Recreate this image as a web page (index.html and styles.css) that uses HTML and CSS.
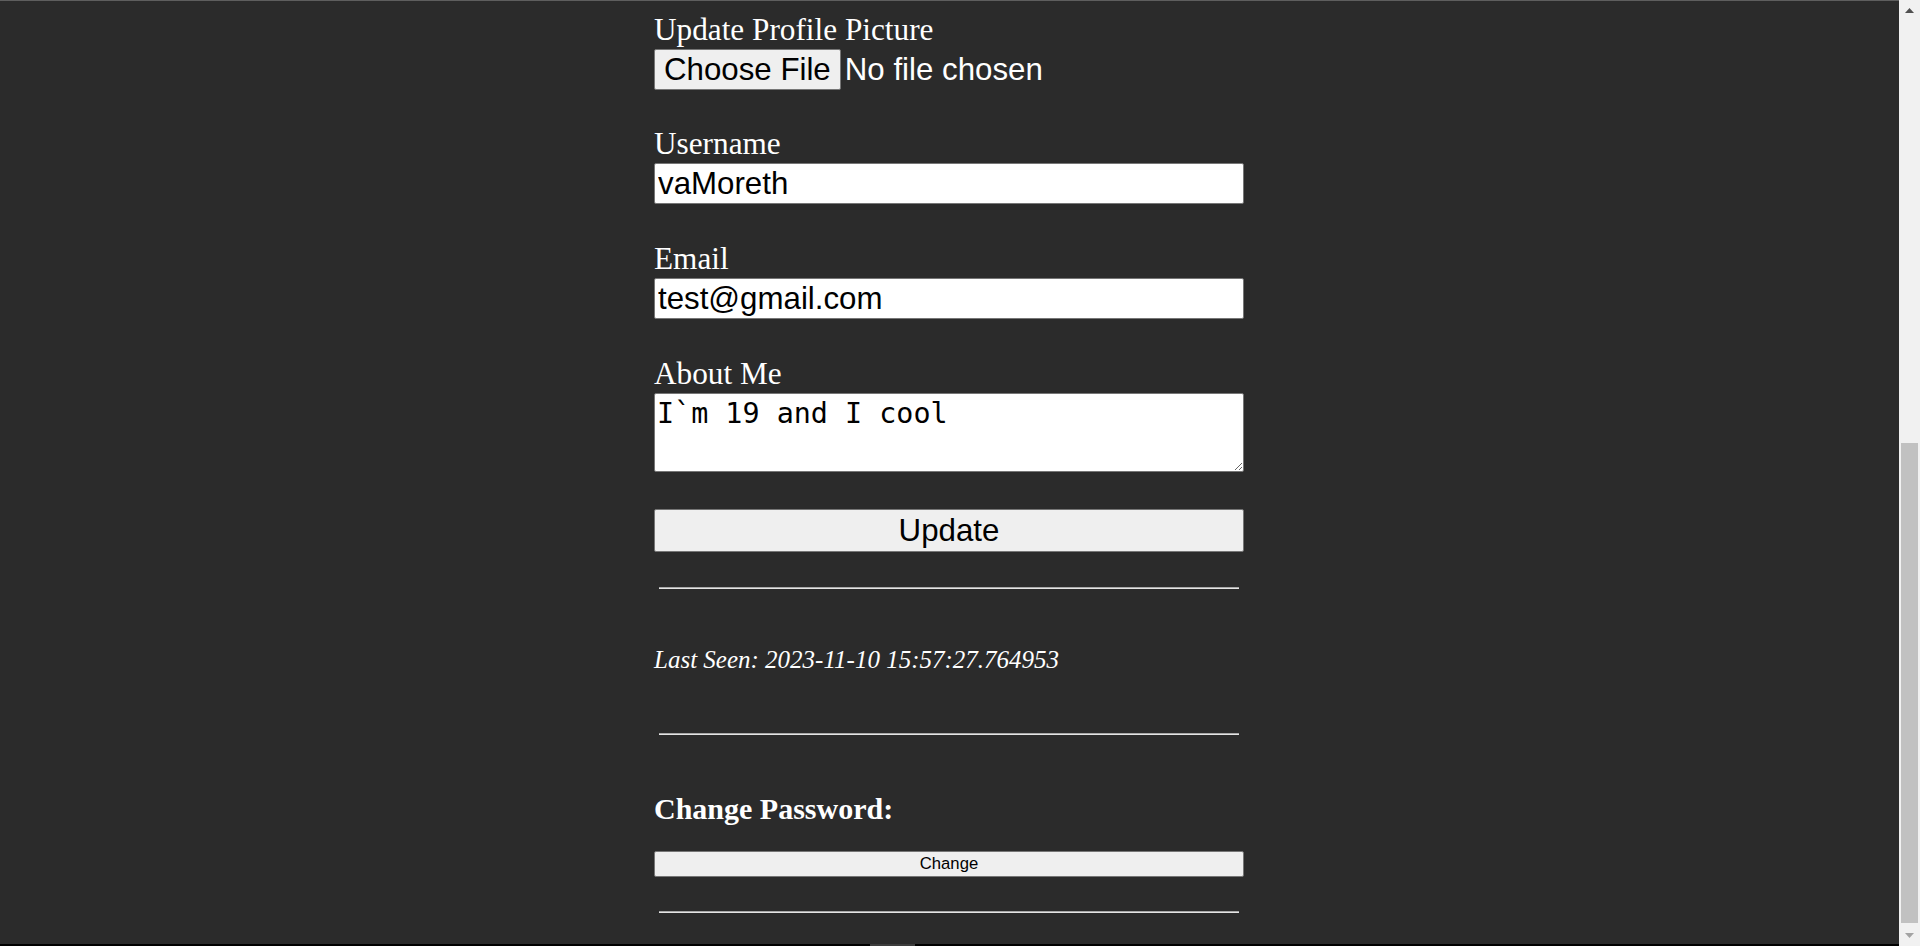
FILE: index.html
```html
<!DOCTYPE html>
<html lang="en">
<head>
<meta charset="utf-8">
<title>Profile</title>
<link rel="stylesheet" href="styles.css">
</head>
<body>
<div class="window">
  <div class="viewport">
    <div class="topline"></div>
    <main class="content">
      <form class="profile-form">
        <label class="field-label first">Update Profile Picture</label>
        <div class="file-row">
          <button type="button" class="file-btn">Choose File</button>
          <span class="file-status">No file chosen</span>
        </div>

        <label class="field-label user">Username</label>
        <input class="text-input" type="text" value="vaMoreth">

        <label class="field-label">Email</label>
        <input class="text-input" type="text" value="test@gmail.com">

        <label class="field-label">About Me</label>
        <textarea class="about-input">I`m 19 and I cool</textarea>

        <button type="button" class="update-btn">Update</button>

        <hr class="divider d1">
        <p class="last-seen">Last Seen: 2023-11-10 15:57:27.764953</p>
        <hr class="divider d2">

        <h3 class="pw-title">Change Password:</h3>
        <button type="button" class="change-btn">Change</button>
        <hr class="divider d3">
      </form>
    </main>
    <div class="bottom-strip"><div class="strip-mark"></div></div>
  </div>
  <div class="scrollbar">
    <div class="sb-btn">
      <svg width="9" height="5" viewBox="0 0 9 5"><polygon points="0,5 4.5,0 9,5" fill="#505050"/></svg>
    </div>
    <div class="sb-track"><div class="sb-thumb"></div></div>
    <div class="sb-btn down">
      <svg width="9" height="5" viewBox="0 0 9 5"><polygon points="0,0 9,0 4.5,5" fill="#a3a3a3"/></svg>
    </div>
  </div>
</div>
</body>
</html>
```
FILE: styles.css
```css
html, body {
  margin: 0;
  padding: 0;
  height: 100%;
  overflow: hidden;
}

body {
  background: #2b2b2b;
  color: #ffffff;
  font-family: "Liberation Serif", "Times New Roman", serif;
}

.window {
  display: flex;
  height: 946px;
}

.viewport {
  flex: 1;
  display: flex;
  flex-direction: column;
  min-width: 0;
}

.topline {
  height: 1px;
  background: #5e5e5e;
  flex: none;
}

.content {
  flex: 1;
  overflow: hidden;
}

.profile-form {
  width: 590px;
  margin-left: 654px;
  display: flex;
  flex-direction: column;
}

.field-label {
  display: block;
  font-size: 31.25px;
  line-height: 36px;
  height: 36px;
  margin-top: 36.5px;
  margin-bottom: 1.5px;
}

.field-label.first {
  margin-top: 10.5px;
}

.field-label.user {
  margin-top: 35.5px;
}

.file-row {
  display: flex;
  align-items: center;
  gap: 4px;
  height: 41px;
}

.file-btn,
.update-btn,
.change-btn {
  font-family: "Liberation Sans", Arial, sans-serif;
  color: #000;
  background: #efefef;
  border: 1px solid #767676;
  border-radius: 2px;
  box-sizing: border-box;
  margin: 0;
  cursor: default;
}

.file-btn {
  height: 41px;
  padding: 0 9px;
  font-size: 31.25px;
  line-height: 36px;
}

.file-status {
  font-family: "Liberation Sans", Arial, sans-serif;
  font-size: 31.25px;
  line-height: 41px;
  color: #fff;
}

.text-input {
  box-sizing: border-box;
  width: 590px;
  height: 41px;
  margin: 0;
  padding: 0 3px;
  border: 1px solid #767676;
  border-radius: 2px;
  background: #fff;
  color: #000;
  font-family: "Liberation Sans", Arial, sans-serif;
  font-size: 31.25px;
  outline: none;
}

.about-input {
  box-sizing: border-box;
  width: 590px;
  height: 79px;
  margin: 0;
  padding: 3px 2px;
  border: 1px solid #767676;
  border-radius: 2px;
  background: #fff;
  color: #000;
  font-family: "DejaVu Sans Mono", "Liberation Mono", monospace;
  font-size: 28.4px;
  line-height: 34px;
  outline: none;
}

.update-btn {
  margin-top: 37px;
  width: 590px;
  height: 43px;
  font-size: 31.25px;
  line-height: 36px;
  padding: 0;
}

.divider {
  height: 0;
  border: 0;
  border-top: 1px solid #a8a8a8;
  border-bottom: 1px solid #e4e4e4;
  margin: 0 5px;
}

.divider.d1 { margin-top: 34.5px; }
.divider.d2 { margin-top: 59px; }
.divider.d3 { margin-top: 34px; }

.last-seen {
  margin: 56.5px 0 0;
  font-style: italic;
  font-size: 25px;
  line-height: 29px;
}

.pw-title {
  margin: 57.4px 0 0;
  font-size: 30px;
  font-weight: bold;
  line-height: 34px;
}

.change-btn {
  margin-top: 25px;
  width: 590px;
  height: 26px;
  font-size: 16.67px;
  line-height: 20px;
  padding: 0;
}

.bottom-strip {
  flex: none;
  height: 2px;
  background: #000;
  padding-left: 870px;
}

.strip-mark {
  width: 45px;
  height: 2px;
  background: #3c3c3c;
}

.scrollbar {
  width: 21px;
  flex: none;
  background: #f1f1f1;
  display: flex;
  flex-direction: column;
}

.sb-btn {
  height: 17px;
  display: flex;
  align-items: center;
  justify-content: center;
  padding-top: 4px;
  box-sizing: border-box;
}

.sb-btn.down {
  padding-top: 0;
  padding-bottom: 4px;
  align-items: center;
}

.sb-track {
  flex: 1;
  display: flex;
  flex-direction: column;
  justify-content: flex-end;
  padding: 0 2px 6px;
}

.sb-thumb {
  height: 480px;
  background: #c1c1c1;
}
```
